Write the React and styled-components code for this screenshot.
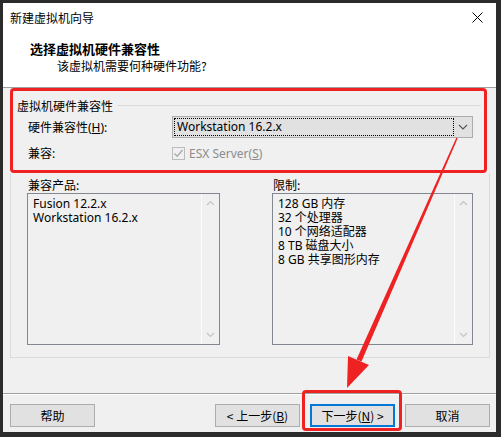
import React from 'react'
import styled, { createGlobalStyle } from 'styled-components'

const Global = createGlobalStyle`
  html, body { margin: 0; padding: 0; }
  body {
    background: #2b2b2b;
    font-family: "Noto Sans", "Noto Sans CJK SC", sans-serif;
    font-size: 12px;
    color: #000;
  }
`

const Frame = styled.div`
  position: relative;
  width: 501px;
  height: 437px;
  box-sizing: border-box;
  padding: 3px 5px 5px 3px;
  background: #2b2b2b;
`

const Window = styled.div`
  height: 100%;
  display: flex;
  flex-direction: column;
  background: #f0f0f0;
`

const TitleBar = styled.div`
  height: 27px;
  display: flex;
  align-items: center;
  justify-content: space-between;
  padding: 1px 13px 0 7px;
  box-sizing: border-box;
  background: #fff;
  font-family: "Noto Sans CJK SC", sans-serif;
  font-size: 12px;
`

const Close = styled.svg`
  width: 11px;
  height: 11px;
`

const Header = styled.div`
  height: 58px;
  box-sizing: border-box;
  padding: 10px 0 0 27px;
  background: #fff;
  border-bottom: 1px solid #a0a0a0;
  font-family: "Noto Sans CJK SC", sans-serif;
`

const HeadTitle = styled.div`
  font-size: 13px;
  font-weight: 700;
  line-height: 18px;
`

const HeadSub = styled.div`
  font-size: 12px;
  line-height: 16px;
  padding-left: 27px;
`

const Body = styled.div`
  flex: 1;
  display: flex;
  flex-direction: column;
  padding-left: 7px;
`

const Highlight = styled.div`
  width: 477px;
  height: 85px;
  box-sizing: border-box;
  border: 3px solid #ee2222;
  border-radius: 4px;
  padding: 6px 3px 0 4px;
`

const GroupHead = styled.div`
  display: flex;
  align-items: center;
  gap: 4px;
  height: 16px;
  font-family: "Noto Sans CJK SC", sans-serif;
  &::after {
    content: "";
    flex: 1;
    border-top: 1px solid #dcdcdc;
  }
`

const FieldRow = styled.div`
  display: grid;
  grid-template-columns: 144px 301px;
  align-items: center;
  margin: ${p => p.$top}px 0 0 11px;
  height: ${p => p.$h}px;
`

const Label = styled.span`
  font-family: "Noto Sans", "Noto Sans CJK SC", sans-serif;
  color: ${p => (p.$dim ? '#8c8c8c' : '#000')};
`

const Select = styled.div`
  height: 22px;
  box-sizing: border-box;
  display: flex;
  align-items: center;
  background: #e1e1e1;
  border: 1px solid #adadad;
  padding-left: 1px;
`

const SelectValue = styled.div`
  width: 280px;
  height: 18px;
  box-sizing: border-box;
  border: 1px dotted #000;
  padding-left: 2px;
  line-height: 16px;
`

const Chevron = styled.svg`
  width: 18px;
  height: 20px;
  flex: none;
`

const Check = styled.label`
  display: flex;
  align-items: center;
  gap: 4px;
`

const Box = styled.span`
  width: 13px;
  height: 13px;
  box-sizing: border-box;
  border: 1px solid #bcbcbc;
  display: flex;
  align-items: center;
  justify-content: center;
`

const Panel = styled.div`
  width: 480px;
  box-sizing: border-box;
  border: 1px solid #dcdcdc;
  border-top: none;
  padding: 4px 16px 12px;
  display: grid;
  grid-template-columns: 193px 201px;
  column-gap: 52px;
`

const ListCol = styled.div`
  display: flex;
  flex-direction: column;
`

const ListTitle = styled.div`
  height: 16px;
  line-height: 16px;
  padding-left: 1px;
  font-family: "Noto Sans CJK SC", sans-serif;
`

const ListBox = styled.div`
  height: 152px;
  box-sizing: border-box;
  border: 1px solid #828790;
  display: flex;
`

const Items = styled.div`
  flex: 1;
  padding: 3px 0 0 5px;
  line-height: 14px;
`

const Scroll = styled.div`
  width: 17px;
  border-left: 1px solid #fbfbfb;
  display: flex;
  flex-direction: column;
  justify-content: space-between;
  align-items: center;
  padding: 6px 0;
`

const Separator = styled.div`
  margin-top: auto;
  border-top: 1px solid #a0a0a0;
  border-bottom: 1px solid #fff;
`

const Buttons = styled.div`
  display: flex;
  align-items: center;
  gap: 10px;
  padding: 9px 6px 5px 7px;
`

const Button = styled.button`
  position: relative;
  width: 85px;
  height: 23px;
  box-sizing: border-box;
  background: #e1e1e1;
  border: ${p => (p.$primary ? '2px solid #0078d7' : '1px solid #adadad')};
  font-family: "Noto Sans CJK SC", sans-serif;
  font-size: 12px;
  color: #000;
  padding: 0;
  margin-left: ${p => (p.$push ? 'auto' : '0')};
  &::after {
    content: "";
    display: ${p => (p.$marked ? 'block' : 'none')};
    position: absolute;
    left: -10px;
    right: -9px;
    top: -16px;
    bottom: -6px;
    border: 3px solid #ee2222;
    border-radius: 4px;
  }
`

const Overlay = styled.svg`
  position: absolute;
  left: 0;
  top: 0;
  pointer-events: none;
`

const ScrollArrows = () => (
  <Scroll>
    <svg width="9" height="6" viewBox="0 0 9 6">
      <polyline points="1,5 4.5,1.5 8,5" fill="none" stroke="#c4c4c4" strokeWidth="1.2" />
    </svg>
    <svg width="9" height="6" viewBox="0 0 9 6">
      <polyline points="1,1 4.5,4.5 8,1" fill="none" stroke="#c4c4c4" strokeWidth="1.2" />
    </svg>
  </Scroll>
)

const products = ['Fusion 12.2.x', 'Workstation 16.2.x']
const limits = ['128 GB 内存', '32 个处理器', '10 个网络适配器', '8 TB 磁盘大小', '8 GB 共享图形内存']

export default function App() {
  return (
    <>
      <Global />
      <Frame>
        <Window>
          <TitleBar>
            <span>新建虚拟机向导</span>
            <Close viewBox="0 0 11 11">
              <path d="M0.5 0.5 L10.5 10.5 M10.5 0.5 L0.5 10.5" stroke="#000" strokeWidth="1" />
            </Close>
          </TitleBar>
          <Header>
            <HeadTitle>选择虚拟机硬件兼容性</HeadTitle>
            <HeadSub>该虚拟机需要何种硬件功能?</HeadSub>
          </Header>
          <Body>
            <Highlight>
              <GroupHead>虚拟机硬件兼容性</GroupHead>
              <FieldRow $top={3} $h={22}>
                <Label>硬件兼容性(<u>H</u>):</Label>
                <Select>
                  <SelectValue>Workstation 16.2.x</SelectValue>
                  <Chevron viewBox="0 0 18 20">
                    <polyline points="5,8 9,12 13,8" fill="none" stroke="#555" strokeWidth="1.1" />
                  </Chevron>
                </Select>
              </FieldRow>
              <FieldRow $top={6} $h={16}>
                <Label>兼容:</Label>
                <Check>
                  <Box>
                    <svg width="11" height="11" viewBox="0 0 11 11">
                      <polyline points="1.5,5.5 4.2,8.2 9.5,2" fill="none" stroke="#a8a8a8" strokeWidth="1.3" />
                    </svg>
                  </Box>
                  <Label $dim>ESX Server(<u>S</u>)</Label>
                </Check>
              </FieldRow>
            </Highlight>
            <Panel>
              <ListCol>
                <ListTitle>兼容产品:</ListTitle>
                <ListBox>
                  <Items>
                    {products.map(p => <div key={p}>{p}</div>)}
                  </Items>
                  <ScrollArrows />
                </ListBox>
              </ListCol>
              <ListCol>
                <ListTitle>限制:</ListTitle>
                <ListBox>
                  <Items>
                    {limits.map(l => <div key={l}>{l}</div>)}
                  </Items>
                  <ScrollArrows />
                </ListBox>
              </ListCol>
            </Panel>
          </Body>
          <Separator />
          <Buttons>
            <Button>帮助</Button>
            <Button $push>&lt; 上一步(<u>B</u>)</Button>
            <Button $primary $marked>下一步(<u>N</u>) &gt;</Button>
            <Button>取消</Button>
          </Buttons>
        </Window>
        <Overlay width="501" height="437" viewBox="0 0 501 437">
          {/* pointer arrow from the dropdown down to the next button */}
          <polygon points="456.3,137.7 457.7,138.3 361.5,361.5 356.5,359.5" fill="#ee2222" />
          <polygon points="347,388 369,365 348,356" fill="#ee2222" />
        </Overlay>
      </Frame>
    </>
  )
}
